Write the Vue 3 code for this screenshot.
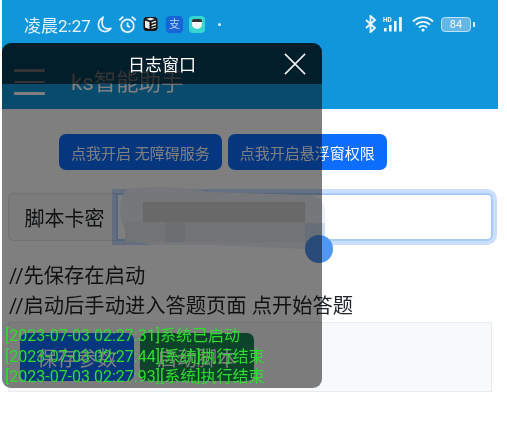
<script setup>
const logs = [
  '[2023-07-03 02:27:31]系统已启动',
  '[2023-07-03 02:27:44][系统]执行结束',
  '[2023-07-03 02:27:93][系统]执行结束'
]
const cells = [0, 1, 2, 3, 4, 5, 6, 7, 8]
</script>

<template>
  <div class="page">
    <div class="screen">
      <header class="appbar">
        <div class="status">
          <span class="clock">凌晨2:27</span>
          <svg class="ic moon" viewBox="0 0 16 18"><path d="M6.500 1.500C3.500 3 1.500 6 1.500 9.500c0 4 3 7 7 7 2.800 0 5-1.300 6.300-3.400-1 .4-2 .6-3 .6-3.800 0-6.300-2.900-6.300-6.400 0-2.300.2-4.200.999-6.300z" fill="none" stroke="#e8f4fb" stroke-width="1.800" stroke-linejoin="round"/></svg>
          <svg class="ic alarm" viewBox="0 0 18 18"><circle cx="9" cy="10.200" r="6" fill="none" stroke="#e8f4fb" stroke-width="1.700"/><path d="M9 7v3.300l2.300 1.200M1.200 5L5 1.500M16.800 5L13 1.500" fill="none" stroke="#e8f4fb" stroke-width="1.700"/></svg>
          <svg class="ic app1" viewBox="0 0 15 16">
            <rect x="0.500" y="1" width="14" height="14" rx="3.500" fill="#111"/>
            <path d="M2 4.500L6.500 6v7L2 11.500zM8.500 6L13 4.500v1.500L8.500 7.500zM8.500 9L13 7.500V9L8.500 10.500zM8.500 12L13 10.500v1L8.500 13zM3 3L7.500 1.800 12 3 7.500 4.500z" fill="#eee"/>
          </svg>
          <span class="app2">支</span>
          <span class="app3"><i></i></span>
          <span class="dot"></span>
          <span class="spacer"></span>
          <svg class="ic bt" viewBox="0 0 12 18"><path d="M1 5l9 8-4.500 4V1l4.500 4-9 8" fill="none" stroke="#f0f8fd" stroke-width="1.800"/></svg>
          <svg class="ic signal" viewBox="0 0 24 18">
            <text x="1" y="6.500" class="hd">HD</text>
            <rect x="2" y="13" width="2.600" height="3.500" fill="#f0f8fd"/>
            <rect x="7" y="10" width="2.600" height="6.500" fill="#f0f8fd"/>
            <rect x="12" y="6" width="2.600" height="10.500" fill="#f0f8fd"/>
            <rect x="17" y="2" width="2.800" height="14.500" fill="#f0f8fd"/>
          </svg>
          <svg class="ic wifi" viewBox="0 0 22 16"><path d="M1 5.500a14 14 0 0 1 20 0M4 8.700a10 10 0 0 1 14 0M7 11.700a5.500 5.500 0 0 1 8 0" fill="none" stroke="#f0f8fd" stroke-width="1.800"/><circle cx="11" cy="14" r="1.600" fill="#f0f8fd"/></svg>
          <span class="battery"><b>84</b></span>
        </div>
        <div class="toolbar">
          <div class="burger"><i></i><i></i><i></i></div>
          <span class="title">ks智能助手</span>
        </div>
      </header>

      <main class="content">
        <div class="actions">
          <button class="btn blue small">点我开启 无障碍服务</button>
          <button class="btn blue small">点我开启悬浮窗权限</button>
        </div>

        <div class="group">
          <span class="label">脚本卡密</span>
          <div class="field"></div>
          <div class="mosaic">
            <svg class="blob" viewBox="0 0 208 64">
              <path d="M14 2C40 0 70 1 88 6L190 9C201 10 207 16 207 25V48C207 58 198 63 188 63L90 59H40C14 59 2 42 2 26 2 12 6 3 14 2z" fill="#eceff5"/>
              <path d="M187 37H207V48C207 55 202 59 187 60z" fill="#cfdcf0"/>
            </svg>
            <div class="band"></div>
            <div class="cells"><i v-for="c in cells" :key="c"></i></div>
          </div>
        </div>

        <div class="notes">
          <p>//先保存在启动</p>
          <p>//启动后手动进入答题页面 点开始答题</p>
        </div>

        <div class="panel">
          <button class="btn blue large">保存参数</button>
          <button class="btn green large">启动脚本</button>
        </div>
      </main>
    </div>

    <span class="fab"></span>

    <aside class="log">
      <div class="log-head">
        <span>日志窗口</span>
        <svg class="close" viewBox="0 0 24 24"><path d="M1 1l22 22M23 1L1 23" fill="none" stroke="#f2f2f2" stroke-width="1.700"/></svg>
      </div>
      <div class="log-body">
        <div v-for="line in logs" :key="line" class="log-line">{{ line }}</div>
      </div>
    </aside>
  </div>
</template>

<style>
html, body { margin: 0; background: #fff; }
</style>

<style scoped>
.page {
  position: relative;
  width: 507px;
  height: 427px;
  overflow: hidden;
  background: #fff;
  font-family: "Roboto", "Noto Sans CJK SC", sans-serif;
  color: #212529;
  filter: blur(0.4px);
}
.screen { width: 496px; margin-left: 2px; }
.appbar { height: 109px; background: #1296db; color: #fff; box-sizing: border-box; }
.status { height: 48px; display: flex; align-items: center; padding: 0 0 0 22px; }
.clock { font-size: 17px; color: #e8f4fb; width: 73px; white-space: nowrap; }
.ic { display: block; flex: none; }
.moon { width: 15px; height: 17px; }
.alarm { width: 19px; height: 19px; margin-left: 6px; }
.app1 { width: 15px; height: 16px; margin-left: 6px; }
.app2 {
  width: 17px; height: 17px; margin-left: 8px; border-radius: 4px; background: #1763d8;
  font-size: 11px; line-height: 17px; text-align: center; color: #b9d3f7;
}
.app3 {
  width: 16px; height: 17px; margin-left: 6px; border-radius: 4px; background: #35d6d0;
  display: flex; align-items: center; justify-content: center;
}
.app3 i { width: 10px; height: 10px; border-radius: 2px 2px 5px 5px; background: #f6f6f6; border-top: 3px solid #333; box-sizing: border-box; }
.dot { width: 3px; height: 3px; border-radius: 50%; background: #dff0fa; margin-left: 13px; }
.spacer { flex: 1; }
.bt { width: 12px; height: 18px; }
.signal { width: 24px; height: 18px; margin-left: 5px; }
.hd { font-size: 6.500px; font-weight: 700; fill: #f0f8fd; font-family: "Roboto", sans-serif; }
.wifi { width: 22px; height: 16px; margin-left: 6px; }
.battery {
  position: relative; width: 28px; height: 13px; margin: 0 27px 0 7px; border: 1.500px solid #bfe3f7;
  border-radius: 4px; display: flex; align-items: center; justify-content: center;
  background: #62b6e8; font-size: 11px; color: #f4fbff;
}
.battery b { font-weight: 400; }
.battery::after {
  content: ""; position: absolute; right: -5px; top: 4px; width: 2px; height: 5px;
  background: #e8f4fb; border-radius: 0 1px 1px 0;
}
.toolbar { height: 61px; display: flex; align-items: flex-start; padding: 21px 0 0 12px; box-sizing: border-box; }
.burger { width: 31px; display: flex; flex-direction: column; gap: 9px; }
.burger i { display: block; height: 2.500px; background: #fff; border-radius: 1px; }
.title { font-size: 22.400px; line-height: 26px; margin-left: 26px; }

.content { display: flex; flex-direction: column; padding: 0 5px 0 6px; }
.actions { display: flex; gap: 6px; padding: 25px 0 0 51px; }
.btn { border: 0; color: #fff; font-family: inherit; white-space: nowrap; }
.blue { background: #0d6efd; }
.green { background: #198754; }
.small { height: 36px; font-size: 15px; padding: 0 12px; border-radius: 7px; }
.large { width: 114px; height: 48px; font-size: 20px; border-radius: 7px; padding: 0; }

.group { position: relative; display: flex; height: 48px; margin-top: 23px; }
.label {
  width: 108px; box-sizing: border-box; display: flex; align-items: center; justify-content: center;
  font-size: 20px; padding-left: 4px; background: #f8f9fa; border: 1px solid #dee2e6; border-right: 0; border-radius: 6px 0 0 6px;
}
.field {
  flex: 1; background: #fff; border: 2px solid #a9cbfc; border-radius: 0 6px 6px 0;
  box-shadow: 0 0 0 4px rgba(13, 110, 253, .22);
}
.mosaic { position: absolute; left: 110px; top: -7px; width: 208px; height: 64px; }
.blob { position: absolute; inset: 0; width: 208px; height: 64px; display: block; }
.band { position: absolute; left: 25px; top: 16px; width: 162px; height: 20px; background: #d2d2d2; }
.cells { position: absolute; left: 7px; top: 36px; display: flex; }
.cells i { display: block; width: 20px; height: 20px; background: #e4e6ea; }
.cells i:nth-child(3) { background: #d8dfe2; }

.notes { margin-top: 20px; font-size: 20.300px; line-height: 30px; padding-left: 1px; }
.notes p { margin: 0; white-space: nowrap; }
.panel {
  display: flex; gap: 6px; height: 70px; box-sizing: border-box; margin-top: 1px; width: 484px;
  padding: 10px 11px; background: #f8f9fa; border: 1px solid #e9ecef;
}

.fab {
  position: absolute; left: 305px; top: 235px; width: 28px; height: 28px; border-radius: 50%;
  background: #5097f5;
}
.log {
  position: absolute; left: 2px; top: 43px; width: 320px; height: 345px; border-radius: 9px;
  background: rgba(0, 0, 0, .5); display: flex; flex-direction: column; overflow: hidden;
}
.log-head {
  height: 41px; flex: none; position: relative; background: rgba(0, 0, 0, .6);
  display: flex; align-items: center; justify-content: center; color: #fff; font-size: 17px;
}
.close { position: absolute; right: 16px; top: 10px; width: 22px; height: 22px; }
.log-body { flex: 1; padding-top: 242px; padding-left: 3px; }
.log-line { font-size: 16px; line-height: 20.700px; color: #2fdc2f; white-space: nowrap; }
</style>
